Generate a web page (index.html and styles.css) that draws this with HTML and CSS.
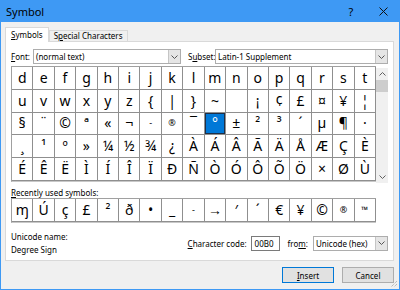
FILE: index.html
```html
<!DOCTYPE html>
<html lang="en">
<head>
    <meta charset="UTF-8">
    <title>Symbol</title>
    <link rel="stylesheet" href="styles.css">
</head>
<body>
    <div class="window">
        <div class="titlebar">
            <span class="title">Symbol</span>
            <span class="tb-btn">?</span>
            <span class="tb-btn">
                <svg width="9" height="9" viewBox="0 0 9 9"><path d="M0.5 0.5 L8.5 8.5 M8.5 0.5 L0.5 8.5" stroke="#111" stroke-width="1"/></svg>
            </span>
        </div>

        <div class="tabs">
            <div class="tab active"><u>S</u>ymbols</div>
            <div class="tab">S<u>p</u>ecial Characters</div>
        </div>

        <div class="panel">
            <div class="font-row">
                <span class="font-lbl"><u>F</u>ont:</span>
                <div class="select font-select">
                    <span class="select-text">(normal text)</span>
                    <span class="select-arrow"><svg width="7" height="4" viewBox="0 0 7 4"><path d="M0.5 0.5 L3.5 3.5 L6.5 0.5" fill="none" stroke="#555"/></svg></span>
                </div>
                <span class="subset-lbl">S<u>u</u>bset:</span>
                <div class="select subset-select">
                    <span class="select-text">Latin-1 Supplement</span>
                    <span class="select-arrow"><svg width="7" height="4" viewBox="0 0 7 4"><path d="M0.5 0.5 L3.5 3.5 L6.5 0.5" fill="none" stroke="#555"/></svg></span>
                </div>
            </div>

            <div class="charmap">
                <div class="chargrid">
                    <span class="cell">d</span><span class="cell">e</span><span class="cell">f</span><span class="cell">g</span><span class="cell">h</span><span class="cell">i</span><span class="cell">j</span><span class="cell">k</span><span class="cell">l</span><span class="cell">m</span><span class="cell">n</span><span class="cell">o</span><span class="cell">p</span><span class="cell">q</span><span class="cell">r</span><span class="cell">s</span><span class="cell">t</span>
                    <span class="cell">u</span><span class="cell">v</span><span class="cell">w</span><span class="cell">x</span><span class="cell">y</span><span class="cell">z</span><span class="cell">{</span><span class="cell">|</span><span class="cell">}</span><span class="cell">~</span><span class="cell">&nbsp;</span><span class="cell">¡</span><span class="cell">¢</span><span class="cell">£</span><span class="cell">¤</span><span class="cell">¥</span><span class="cell">¦</span>
                    <span class="cell">§</span><span class="cell">¨</span><span class="cell">©</span><span class="cell">ª</span><span class="cell">«</span><span class="cell">¬</span><span class="cell small">-</span><span class="cell small">®</span><span class="cell">¯</span><span class="cell selected">°</span><span class="cell">±</span><span class="cell">²</span><span class="cell">³</span><span class="cell">´</span><span class="cell">µ</span><span class="cell">¶</span><span class="cell">·</span>
                    <span class="cell">¸</span><span class="cell">¹</span><span class="cell">º</span><span class="cell">»</span><span class="cell">¼</span><span class="cell">½</span><span class="cell">¾</span><span class="cell">¿</span><span class="cell">À</span><span class="cell">Á</span><span class="cell">Â</span><span class="cell">Ã</span><span class="cell">Ä</span><span class="cell">Å</span><span class="cell">Æ</span><span class="cell">Ç</span><span class="cell">È</span>
                    <span class="cell">É</span><span class="cell">Ê</span><span class="cell">Ë</span><span class="cell">Ì</span><span class="cell">Í</span><span class="cell">Î</span><span class="cell">Ï</span><span class="cell">Ð</span><span class="cell">Ñ</span><span class="cell">Ò</span><span class="cell">Ó</span><span class="cell">Ô</span><span class="cell">Õ</span><span class="cell">Ö</span><span class="cell">×</span><span class="cell">Ø</span><span class="cell">Ù</span>
                </div>
                <div class="scrollbar">
                    <span class="sb-arrow"><svg width="7" height="4" viewBox="0 0 7 4"><path d="M0.5 3.5 L3.5 0.5 L6.5 3.5" fill="none" stroke="#606060"/></svg></span>
                    <span class="sb-thumb"></span>
                    <span class="sb-track"></span>
                    <span class="sb-arrow"><svg width="7" height="4" viewBox="0 0 7 4"><path d="M0.5 0.5 L3.5 3.5 L6.5 0.5" fill="none" stroke="#606060"/></svg></span>
                </div>
            </div>

            <div class="recent-lbl"><u>R</u>ecently used symbols:</div>
            <div class="recent">
                <span class="cell">ɱ</span><span class="cell">Ú</span><span class="cell">ç</span><span class="cell">£</span><span class="cell">²</span><span class="cell">ð</span><span class="cell">•</span><span class="cell">_</span><span class="cell small">-</span><span class="cell">→</span><span class="cell">′</span><span class="cell">´</span><span class="cell">€</span><span class="cell">¥</span><span class="cell">©</span><span class="cell small">®</span><span class="cell small">™</span>
            </div>

            <div class="info">
                <div class="name">
                    <div>Unicode name:</div>
                    <div>Degree Sign</div>
                </div>
                <div class="code">
                    <span><u>C</u>haracter code:</span>
                    <div class="textbox">00B0</div>
                    <span class="from-lbl">fro<u>m</u>:</span>
                    <div class="select from-select">
                        <span class="select-text">Unicode (hex)</span>
                        <span class="select-arrow"><svg width="7" height="4" viewBox="0 0 7 4"><path d="M0.5 0.5 L3.5 3.5 L6.5 0.5" fill="none" stroke="#555"/></svg></span>
                    </div>
                </div>
            </div>
        </div>

        <div class="buttons">
            <button class="btn default"><u>I</u>nsert</button>
            <button class="btn">Cancel</button>
        </div>

        <svg class="grip" width="8" height="8" viewBox="0 0 8 8"><path d="M7 1 L1 7 M7 4 L4 7" stroke="#a0a0a0" stroke-width="1" stroke-dasharray="1 1"/></svg>
    </div>
</body>
</html>
```

FILE: styles.css
```css
* { margin: 0; padding: 0; box-sizing: border-box; }
body {
    font-family: "Noto Sans", sans-serif;
    font-size: 8px;
    color: #000;
    background: #f0f0f0;
    width: 400px;
    height: 290px;
    overflow: hidden;
}
u { text-decoration: underline; text-underline-offset: 1px; }
.window {
    position: relative;
    width: 400px;
    height: 290px;
    border: 1px solid #3e99f4;
    border-top: none;
    background: #f0f0f0;
}
.titlebar {
    height: 22px;
    background: #3e99f4;
    display: flex;
    align-items: center;
    padding-left: 5px;
    font-size: 11px;
}
.title { flex: 1; }
.tb-btn {
    width: 32px;
    text-align: center;
    display: flex;
    justify-content: center;
    align-items: center;
}
.tabs {
    display: flex;
    align-items: flex-end;
    height: 14px;
    margin: 5px 0 0 4px;
}
.tab {
    height: 11px;
    padding: 0 4px;
    border: 1px solid #d9d9d9;
    border-bottom: none;
    line-height: 10px;
    background: #f0f0f0;
}
.tab.active {
    height: 15px;
    margin-bottom: -1px;
    position: relative;
    background: #fff;
    line-height: 13px;
    padding: 0 5px 0 5px;
}
.panel {
    margin-left: 4px;
    width: 389px;
    height: 220px;
    background: #fff;
    border: 1px solid #d9d9d9;
    padding: 7px 5px 0 5px;
}
.font-row {
    display: flex;
    align-items: center;
    height: 15px;
}
.font-lbl { width: 22px; }
.subset-lbl { width: 27px; margin-left: 7px; }
.select {
    display: flex;
    height: 15px;
    border: 1px solid #adadad;
    background: #fff;
}
.font-select { width: 148px; }
.subset-select { flex: 1; }
.select-text { flex: 1; padding-left: 2px; line-height: 13px; white-space: nowrap; overflow: hidden; }
.select-arrow {
    width: 12px;
    display: flex;
    align-items: center;
    justify-content: center;
    background: #e5e5e5;
    border-left: 1px solid #c5c5c5;
}
.charmap {
    display: flex;
    margin-top: 2px;
    height: 116px;
}
.chargrid, .recent {
    display: grid;
    grid-template-columns: repeat(17, 1fr);
    width: 365px;
    border-left: 1px solid #a0a0a0;
    border-top: 1px solid #a0a0a0;
}
.chargrid {
    grid-template-rows: repeat(5, 1fr);
    height: 116px;
    border-bottom: 1px solid #c8c8c8;
}
.cell {
    display: flex;
    align-items: center;
    justify-content: center;
    border-right: 1px solid #8f8f8f;
    border-bottom: 1px solid #8f8f8f;
    font-size: 14px;
    line-height: 1;
    overflow: hidden;
}
.cell.small { font-size: 9px; align-items: flex-start; padding-top: 5px; }
.cell.selected {
    background: #0078d7;
    color: #fff;
    box-shadow: inset 0 0 0 1px #1e2f47;
}
.scrollbar {
    width: 12px;
    margin-top: 2px;
    height: 115px;
    display: flex;
    flex-direction: column;
    background: #f0f0f0;
}
.sb-arrow {
    height: 12px;
    display: flex;
    align-items: center;
    justify-content: center;
}
.sb-thumb { height: 12px; background: #cdcdcd; }
.sb-track { flex: 1; }
.recent-lbl {
    margin-top: 6px;
    height: 10px;
    line-height: 10px;
}
.recent {
    height: 25px;
    border-bottom: 1px solid #c8c8c8;
}
.recent .cell.small { padding-top: 6px; }
.info {
    display: flex;
    align-items: center;
    margin-top: 7px;
}
.name { flex: 1; line-height: 13px; }
.code { display: flex; align-items: center; white-space: nowrap; }
.textbox {
    width: 29px;
    height: 15px;
    margin-left: 4px;
    border: 1px solid #7a7a7a;
    padding-left: 3px;
    line-height: 13px;
    background: #fff;
}
.from-lbl { margin-left: 8px; }
.from-select { width: 75px; margin-left: 5px; }
.buttons {
    display: flex;
    justify-content: flex-end;
    gap: 8px;
    margin: 6px 5px 0 0;
}
.btn {
    width: 52px;
    height: 16px;
    font-family: inherit;
    font-size: 8px;
    background: #e1e1e1;
    border: 1px solid #adadad;
    color: #000;
}
.btn.default { border-color: #0078d7; }
.grip { position: absolute; right: 1px; bottom: 1px; }
```
